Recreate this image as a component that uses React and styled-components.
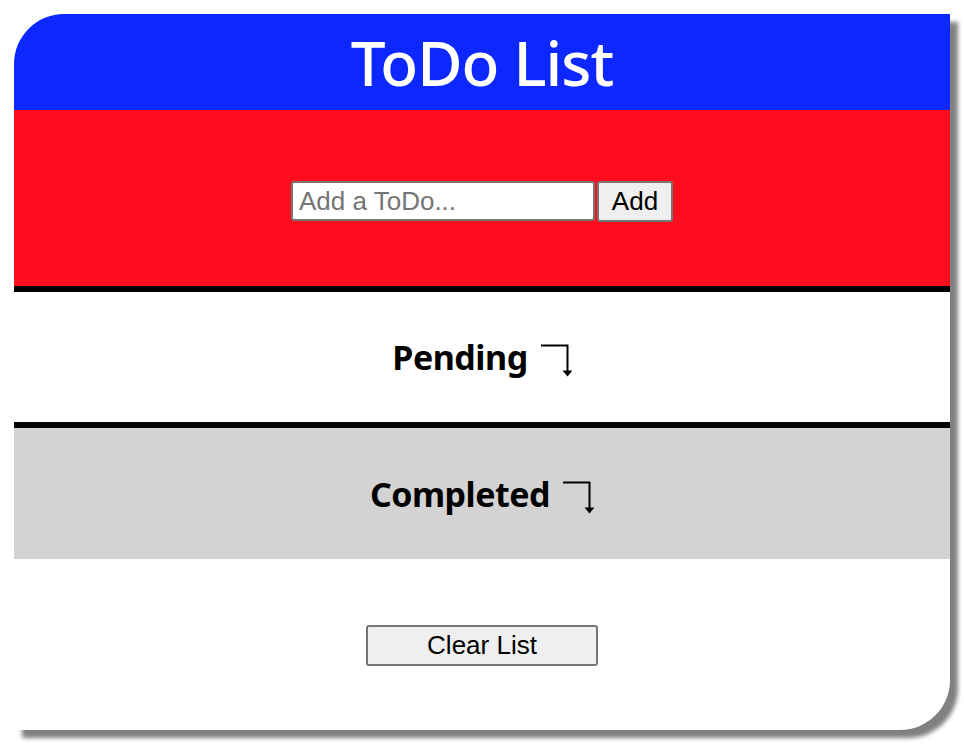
import React, { useState } from 'react'
import styled, { createGlobalStyle } from 'styled-components'

const Global = createGlobalStyle`
  body {
    margin: 0;
    padding: 14px;
    background: #fff;
    font-family: "Noto Sans", sans-serif;
  }
`

const Card = styled.div`
  width: 936px;
  height: 716px;
  display: flex;
  flex-direction: column;
  background: #fff;
  border-radius: 50px 0 50px 0;
  box-shadow: 8px 8px 4px #808080;
  overflow: hidden;
`

const Header = styled.header`
  height: 96px;
  background: #0c27ff;
  color: #fff;
  display: flex;
  align-items: center;
  justify-content: center;

  h1 {
    margin: 0;
    font-size: 62px;
    font-weight: 500;
    letter-spacing: -1px;
  }
`

const Entry = styled.div`
  height: 182px;
  box-sizing: border-box;
  background: #ff0d1e;
  border-bottom: 6px solid #000;
  padding-top: 6px;
  display: flex;
  align-items: center;
  justify-content: center;
`

const Input = styled.input`
  width: 304px;
  height: 40px;
  box-sizing: border-box;
  border: 2px solid #767676;
  border-radius: 3px;
  padding: 0 6px;
  font-family: "Liberation Sans", Arial, sans-serif;
  font-size: 26px;
  color: #000;

  &::placeholder {
    color: #757575;
  }
`

const Button = styled.button`
  width: ${p => p.$width}px;
  height: 41px;
  margin-left: ${p => p.$gap || 0}px;
  box-sizing: border-box;
  border: 2px solid #767676;
  border-radius: 3px;
  background: #efefef;
  font-family: "Liberation Sans", Arial, sans-serif;
  font-size: 26px;
  color: #000;
  padding: 0;
`

const Section = styled.section`
  height: ${p => p.$height}px;
  box-sizing: border-box;
  background: ${p => p.$bg};
  border-bottom: ${p => (p.$divider ? '6px solid #000' : 'none')};
  display: flex;
  align-items: center;
  justify-content: center;

  h2 {
    margin: 0;
    display: flex;
    align-items: center;
    font-size: 34px;
    font-weight: 700;
    letter-spacing: -0.5px;
  }
`

const Arrow = styled.svg`
  width: 32px;
  height: 34px;
  margin-left: 12px;
  margin-top: 8px;
`

const Footer = styled.div`
  flex: 1;
  display: flex;
  align-items: center;
  justify-content: center;
  padding-top: 2px;
`

const CornerArrow = () => (
  <Arrow viewBox="0 0 32 34" fill="none">
    <path d="M1 1.5H27.5V28" stroke="#000" strokeWidth="2" />
    <path d="M22.5 26.5H32.5L27.5 32.5Z" fill="#000" />
  </Arrow>
)

export default function App() {
  const [value, setValue] = useState('')
  return (
    <>
      <Global />
      <Card>
        <Header>
          <h1>ToDo List</h1>
        </Header>
        <Entry>
          <Input
            placeholder="Add a ToDo..."
            value={value}
            onChange={e => setValue(e.target.value)}
          />
          <Button $width={76} $gap={2}>Add</Button>
        </Entry>
        <Section $height={136} $bg="#fff" $divider>
          <h2>Pending<CornerArrow /></h2>
        </Section>
        <Section $height={131} $bg="#d3d3d3">
          <h2>Completed<CornerArrow /></h2>
        </Section>
        <Footer>
          <Button $width={232}>Clear List</Button>
        </Footer>
      </Card>
    </>
  )
}
